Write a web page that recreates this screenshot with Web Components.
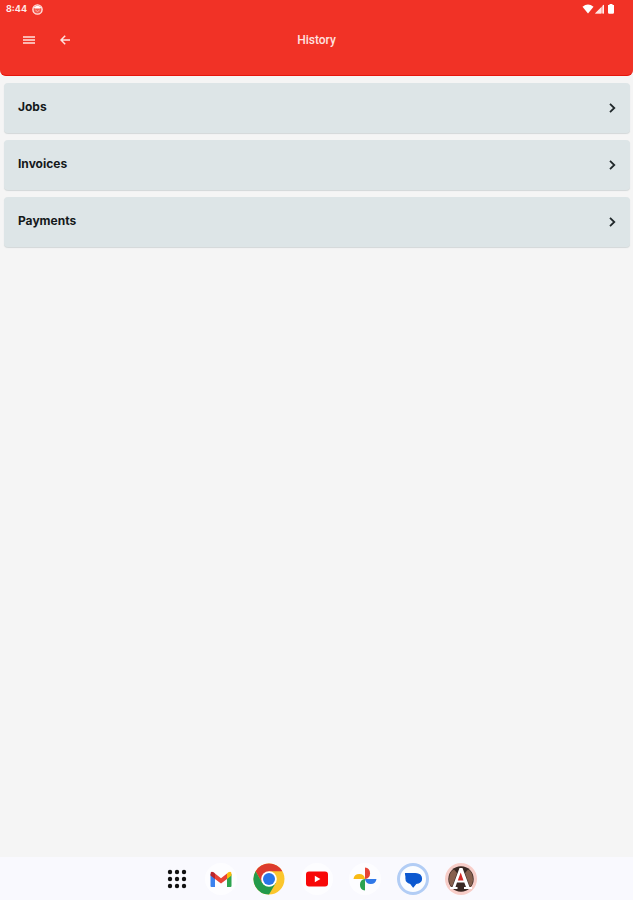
<!DOCTYPE html>
<html lang="en">
<head>
<meta charset="utf-8">
<meta name="viewport" content="width=device-width, initial-scale=1">
<title>History</title>
<style>
  body {
    margin: 0;
    background: #f5f5f5;
    color: #15191b;
    font-family: Inter, 'Open Sans', sans-serif;
  }
</style>
</head>
<body>
<history-page>
  <app-header slot="header">History</app-header>
  <history-link href="#jobs">Jobs</history-link>
  <history-link href="#invoices">Invoices</history-link>
  <history-link href="#payments">Payments</history-link>
  <app-dock slot="dock"></app-dock>
</history-page>

<script>
class HistoryPage extends HTMLElement {
  connectedCallback() {
    this.attachShadow({ mode: 'open' });
    this.shadowRoot.innerHTML = `
      <style>
        :host {
          display: flex;
          flex-direction: column;
          min-height: 100vh;
        }
        main {
          flex: 1;
          display: flex;
          flex-direction: column;
          gap: 7px;
          padding: 7px 3px 7px 4px;
        }
      </style>
      <slot name="header"></slot>
      <main><slot></slot></main>
      <slot name="dock"></slot>
    `;
  }
}

class StatusBar extends HTMLElement {
  connectedCallback() {
    this.attachShadow({ mode: 'open' });
    this.shadowRoot.innerHTML = `
      <style>
        :host {
          display: flex;
          justify-content: space-between;
          align-items: center;
          height: 18px;
          padding: 0 18px 0 6px;
          color: #ffe9e7;
          font: 700 9px/18px Inter, sans-serif;
        }
        div {
          display: flex;
          align-items: center;
        }
        .left { gap: 5px; }
        .right { gap: 1px; }
        svg { display: block; }
      </style>
      <div class="left">
        <span>8:44</span>
        <svg width="11" height="11" viewBox="0 0 11 11" aria-hidden="true">
          <circle cx="5.5" cy="5.5" r="4.6" fill="#f25a4e" stroke="#ffe3e0" stroke-width="1.4"/>
          <path d="M1.8 3.4Q5.5 .2 9.2 3.4L8.2 4.4H2.8Z" fill="#fff"/>
          <path d="M3.4 6L5.5 7.6L7.6 6" fill="none" stroke="#ffc2bc" stroke-width=".8"/>
        </svg>
      </div>
      <div class="right">
        <svg width="12" height="10" viewBox="0 0 12 10" aria-hidden="true">
          <path d="M.5 2.8Q6-1.6 11.5 2.8L6 9.4Z" fill="#fff"/>
        </svg>
        <svg width="10" height="10" viewBox="0 0 10 10" aria-hidden="true">
          <path d="M9 .5V9.5H0Z" fill="#ffb5ae"/>
          <path d="M6 3.5V9.5H0Z" fill="#ffe6e3"/>
          <path d="M8.3 1V9.5" stroke="#fff"/>
        </svg>
        <svg width="9" height="10" viewBox="0 0 9 10" aria-hidden="true">
          <path d="M3.5 0h3v1H8v7.6q0 1.2-1.2 1.2H3.2Q2 9.8 2 8.6V1h1.5z" fill="#fff"/>
        </svg>
      </div>
    `;
  }
}

class AppHeader extends HTMLElement {
  connectedCallback() {
    this.attachShadow({ mode: 'open' });
    this.shadowRoot.innerHTML = `
      <style>
        :host {
          display: block;
          box-sizing: border-box;
          height: 76px;
          background: #f13226;
          border-bottom: 1px solid #e5150c;
          border-radius: 0 0 6px 6px;
        }
        .bar {
          display: grid;
          grid-template-columns: 1fr auto 1fr;
          align-items: center;
          height: 44px;
        }
        .buttons {
          display: flex;
          gap: 12px;
          padding-left: 17px;
        }
        button {
          display: grid;
          place-items: center;
          width: 24px;
          height: 24px;
          padding: 0;
          border: 0;
          background: none;
          color: #ffe3e0;
        }
        h1 {
          margin: 0;
          color: #ffe3e0;
          font: 500 12px/18px Roboto, sans-serif;
        }
      </style>
      <status-bar></status-bar>
      <div class="bar">
        <div class="buttons">
          <button type="button" aria-label="Menu">
            <svg width="12" height="8" viewBox="0 0 12 8" fill="none" stroke="currentColor" stroke-width="1.5">
              <path d="M0 1H12M0 4H12M0 7H12"/>
            </svg>
          </button>
          <button type="button" aria-label="Back">
            <svg width="10" height="10" viewBox="0 0 10 10" fill="none" stroke="currentColor" stroke-width="1.5">
              <path d="M10 5H1.2M5.2 .8L1 5L5.2 9.2"/>
            </svg>
          </button>
        </div>
        <h1><slot></slot></h1>
      </div>
    `;
  }
}

class HistoryLink extends HTMLElement {
  connectedCallback() {
    this.attachShadow({ mode: 'open' });
    this.shadowRoot.innerHTML = `
      <style>
        :host { display: block; }
        a {
          display: flex;
          justify-content: space-between;
          align-items: center;
          height: 50px;
          padding: 0 14px;
          border-radius: 4px;
          background: #dde5e7;
          box-shadow: 0 1px 1px #d3d8d9;
          color: inherit;
          font-size: 12px;
          font-weight: 700;
          line-height: 16px;
          text-decoration: none;
        }
        span { padding-bottom: 2px; }
      </style>
      <a href="${this.getAttribute('href')}">
        <span><slot></slot></span>
        <svg width="8" height="10" viewBox="0 0 8 10" fill="none" stroke="#20282b" stroke-width="1.8" aria-hidden="true">
          <path d="M2 .8L6.300 5L2 9.200"/>
        </svg>
      </a>
    `;
  }
}

class AppDock extends HTMLElement {
  connectedCallback() {
    this.attachShadow({ mode: 'open' });
    this.shadowRoot.innerHTML = `
      <style>
        :host {
          display: flex;
          justify-content: center;
          align-items: center;
          gap: 16px;
          height: 43px;
          padding-left: 9px;
          background: #f9f9fe;
        }
        button {
          flex: none;
          width: 32px;
          height: 32px;
          padding: 0;
          border: 0;
          border-radius: 50%;
          background: #fdfdff;
        }
        .all {
          width: 24px;
          background: none;
        }
        svg { display: block; margin: auto; }
      </style>
      <button type="button" class="all" aria-label="All apps">
        <svg width="20" height="20" viewBox="0 0 20 20" fill="#111">
          <circle cx="3" cy="3" r="2.2"/><circle cx="10" cy="3" r="2.2"/><circle cx="17" cy="3" r="2.2"/>
          <circle cx="3" cy="10" r="2.2"/><circle cx="10" cy="10" r="2.2"/><circle cx="17" cy="10" r="2.2"/>
          <circle cx="3" cy="17" r="2.2"/><circle cx="10" cy="17" r="2.2"/><circle cx="17" cy="17" r="2.2"/>
        </svg>
      </button>
      <button type="button" aria-label="Gmail">
        <svg width="32" height="32" viewBox="0 0 32 32">
          <path d="M5.500 11V23q0 1 1 1H10V14.500Z" fill="#3b82ee"/>
          <path d="M26.500 11V23q0 1-1 1H22V14.500Z" fill="#2da44f"/>
          <path d="M22 10.500L23.300 9.300Q26.500 7.600 26.500 11V12.500L22 16Z" fill="#fbb90b"/>
          <path d="M10 10.500L8.700 9.300Q5.500 7.600 5.500 11V12.500L10 16Z" fill="#b9252c"/>
          <path d="M10 10.500L16 15.200L22 10.500V16L16 20.500L10 16Z" fill="#e94335"/>
        </svg>
      </button>
      <button type="button" aria-label="Chrome">
        <svg width="32" height="32" viewBox="0 0 32 32">
          <circle cx="16" cy="16" r="15.500" fill="#fbc62d"/>
          <path d="M2.600 8.200A15.500 15.500 0 0 1 29.400 8.200H16L9.200 20Z" fill="#dc3b2e"/>
          <path d="M2.600 8.200A15.500 15.500 0 0 0 16 31.500L22.800 19.900L9.300 19.900Z" fill="#239a4b"/>
          <circle cx="16" cy="16" r="7.800" fill="#fff"/>
          <circle cx="16" cy="16" r="6" fill="#2875e8"/>
        </svg>
      </button>
      <button type="button" aria-label="YouTube">
        <svg width="32" height="32" viewBox="0 0 32 32">
          <rect x="5" y="8.500" width="22" height="15" rx="3" fill="#f80808"/>
          <path d="M13.800 12.800V19.200L19.400 16Z" fill="#fff"/>
        </svg>
      </button>
      <button type="button" aria-label="Photos">
        <svg width="32" height="32" viewBox="0 0 32 32">
          <path d="M16 16V4.500A5.800 5.800 0 0 1 16 16Z" fill="#e64335"/>
          <path d="M16 16H27.500A5.800 5.800 0 0 1 16 16Z" fill="#3179e8"/>
          <path d="M16 16V27.500A5.800 5.800 0 0 1 16 16Z" fill="#2ca351"/>
          <path d="M16 16H4.500A5.800 5.800 0 0 1 16 16Z" fill="#f9bb15"/>
        </svg>
      </button>
      <button type="button" aria-label="Messages">
        <svg width="32" height="32" viewBox="0 0 32 32">
          <circle cx="16" cy="16" r="14.500" fill="#fbfdff" stroke="#b2cdf5" stroke-width="3"/>
          <path d="M8.500 10.500H18Q24.500 10.800 24.500 15.700Q24.500 19.800 19 20.300L16.200 24L13.500 20.300Q9 19.500 9 15.500V13.500Z" fill="#0b58d0" stroke="#0b58d0" stroke-width="1.200" stroke-linejoin="round"/>
        </svg>
      </button>
      <button type="button" aria-label="Account app">
        <svg width="32" height="32" viewBox="0 0 32 32">
          <circle cx="16" cy="16" r="16" fill="#f7cdc8"/>
          <circle cx="16" cy="16" r="12.700" fill="#3a2924"/>
          <path d="M4 17Q4 9 9 6.500L12 10L7 24Q4 21 4 17ZM28 17Q28 9 23 6.500L20 10L25 24Q28 21 28 17Z" fill="#86604e"/>
          <path d="M14.500 5H17.500L24.500 24H27V26H19V24H21L19.300 19.500H12L10.500 24H12.500V26H5V24H7.500Z" fill="#fff"/>
          <path d="M15.700 9.500L18.500 17.500H12.800Z" fill="#d42a27"/>
        </svg>
      </button>
    `;
  }
}

customElements.define('status-bar', StatusBar);
customElements.define('app-header', AppHeader);
customElements.define('history-link', HistoryLink);
customElements.define('app-dock', AppDock);
customElements.define('history-page', HistoryPage);
</script>
</body>
</html>
